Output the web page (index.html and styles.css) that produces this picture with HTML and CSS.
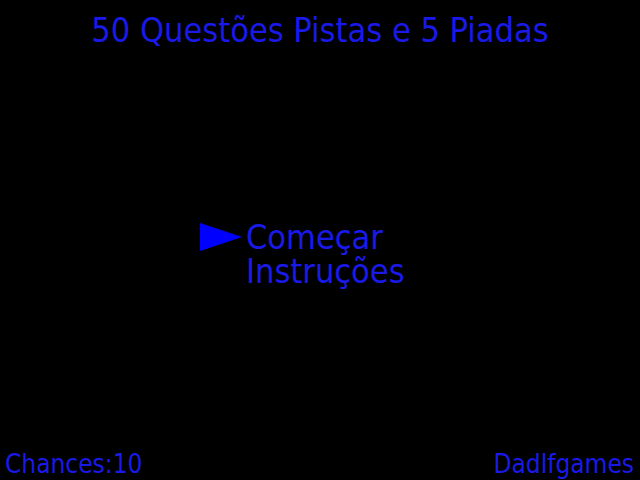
FILE: index.html
```html
<!DOCTYPE html>
<html>
<head>
<meta charset="utf-8">
<link rel="stylesheet" href="styles.css">
</head>
<body>
<div class="screen">
  <h1 class="title">50 Questões Pistas e 5 Piadas</h1>
  <div class="menu">
    <div class="item">
      <svg class="cursor" width="42" height="28" viewBox="0 0 42 28"><polygon points="0,0 42,14 0,28" fill="#0000ff"/></svg>
      <span>Começar</span>
    </div>
    <div class="item"><span class="pad"></span><span>Instruções</span></div>
  </div>
  <div class="footer">
    <span>Chances:10</span>
    <span>Dadlfgames</span>
  </div>
</div>
</body>
</html>
```
FILE: styles.css
```css
html, body { margin: 0; padding: 0; background: #000; }
.screen {
  width: 640px; height: 480px;
  display: flex; flex-direction: column;
  font-family: "DejaVu Sans Condensed", "DejaVu Sans", sans-serif;
  color: #1a1ae6;
}
.title {
  margin: 10px 0 0 0;
  font-weight: normal;
  font-size: 34px;
  line-height: 40px;
  text-align: center;
}
.menu {
  margin: 170px 0 0 200px;
  font-size: 34px;
  line-height: 34px;
}
.item { display: flex; align-items: center; }
.cursor { width: 42px; height: 28px; margin-right: 4px; }
.pad { width: 46px; }
.footer {
  margin-top: auto;
  display: flex; justify-content: space-between;
  font-size: 26px;
  line-height: 28px;
  padding: 0 6px 2px 5px;
}
```
